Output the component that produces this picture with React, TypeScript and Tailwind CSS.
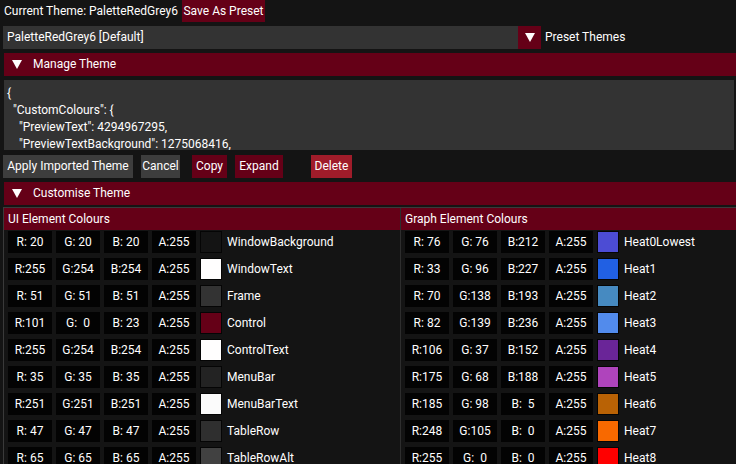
import React from "react";

type Row = { name: string; c: [number, number, number] };

const uiRows: Row[] = [
	{ name: "WindowBackground", c: [20, 20, 20] },
	{ name: "WindowText", c: [255, 254, 254] },
	{ name: "Frame", c: [51, 51, 51] },
	{ name: "Control", c: [101, 0, 23] },
	{ name: "ControlText", c: [255, 254, 254] },
	{ name: "MenuBar", c: [35, 35, 35] },
	{ name: "MenuBarText", c: [251, 251, 251] },
	{ name: "TableRow", c: [47, 47, 47] },
	{ name: "TableRowAlt", c: [65, 65, 65] },
];

const graphRows: Row[] = [
	{ name: "Heat0Lowest", c: [76, 76, 212] },
	{ name: "Heat1", c: [33, 96, 227] },
	{ name: "Heat2", c: [70, 138, 193] },
	{ name: "Heat3", c: [82, 139, 236] },
	{ name: "Heat4", c: [106, 37, 152] },
	{ name: "Heat5", c: [175, 68, 188] },
	{ name: "Heat6", c: [185, 98, 5] },
	{ name: "Heat7", c: [248, 105, 0] },
	{ name: "Heat8", c: [255, 0, 0] },
];

const pad = (n: number) => String(n).padStart(3, " ");

const Triangle = ({ size = 10 }: { size?: number }) => (
	<svg width={size} height={size - 1} viewBox="0 0 10 9">
		<path d="M0 0 L10 0 L5 9 Z" fill="#fffefe" />
	</svg>
);

const Header = ({ title }: { title: string }) => (
	<div className="flex h-[23px] items-center bg-[#650017] ml-[4px]">
		<span className="ml-[8px] mr-[11px] flex">
			<Triangle />
		</span>
		<span>{title}</span>
	</div>
);

const ColourRow = ({ row }: { row: Row }) => {
	const [r, g, b] = row.c;
	const cells = [`R:${pad(r)}`, `G:${pad(g)}`, `B:${pad(b)}`, "A:255"];
	return (
		<div className="flex h-[22px] items-center">
			{cells.map((t, i) => (
				<div
					key={i}
					className="w-[44px] h-[22px] mr-[4px] bg-[#030303] flex items-center justify-center whitespace-pre">
					{t}
				</div>
			))}
			<div
				className="w-[22px] h-[22px] border border-[#050505]"
				style={{ backgroundColor: `rgb(${r},${g},${b})` }}
			/>
			<span className="ml-[5px]">{row.name}</span>
		</div>
	);
};

export default function App() {
	const json = `{
  "CustomColours": {
    "PreviewText": 4294967295,
    "PreviewTextBackground": 1275068416,`;

	return (
		<div
			className="w-[736px] h-[464px] overflow-hidden bg-[#141414] text-[#fffefe] text-[12px] leading-[17px] whitespace-nowrap"
			style={{ fontFamily: "Roboto, sans-serif" }}>
			{/* top line */}
			<div className="flex h-[22px] items-center">
				<span className="ml-[4px] w-[178px]">Current Theme: PaletteRedGrey6</span>
				<div className="h-[22px] w-[83px] bg-[#650017] flex items-center justify-center">
					Save As Preset
				</div>
			</div>

			{/* preset combo */}
			<div className="flex h-[23px] items-center mt-[4px]">
				<div className="ml-[3px] w-[515px] h-full bg-[#333333] flex items-center pl-[4px]">
					PaletteRedGrey6 [Default]
				</div>
				<div className="w-[23px] h-full bg-[#650017] flex items-center justify-center">
					<Triangle />
				</div>
				<span className="ml-[4px]">Preset Themes</span>
			</div>

			<div className="mt-[4px]">
				<Header title="Manage Theme" />
			</div>

			{/* import text */}
			<div className="mt-[4px] ml-[4px] w-[730px] h-[70px] bg-[#333333] overflow-hidden pl-[3px] pt-[5px] whitespace-pre">
				{json}
			</div>

			{/* buttons */}
			<div className="flex h-[23px] mt-[5px]">
				<div className="ml-[3px] w-[130px] bg-[#3d3d3d] flex items-center justify-center">
					Apply Imported Theme
				</div>
				<div className="ml-[8px] w-[39px] bg-[#3d3d3d] flex items-center justify-center">
					Cancel
				</div>
				<div className="ml-[12px] w-[35px] bg-[#650017] flex items-center justify-center">
					Copy
				</div>
				<div className="ml-[8px] w-[48px] bg-[#650017] flex items-center justify-center">
					Expand
				</div>
				<div className="ml-[28px] w-[41px] bg-[#a01c2a] flex items-center justify-center">
					Delete
				</div>
			</div>

			<div className="mt-[4px]">
				<Header title="Customise Theme" />
			</div>

			{/* colour table */}
			<div className="mt-[2px] ml-[3px] border-t border-l border-[#3a3a3a] flex">
				<div className="w-[397px] border-r border-[#2e2e2e]">
					<div className="h-[22px] bg-[#650017] flex items-center pl-[4px]">
						UI Element Colours
					</div>
					<div className="flex flex-col gap-[5px] pt-[1px] pl-[4px]">
						{uiRows.map((r) => (
							<ColourRow key={r.name} row={r} />
						))}
					</div>
				</div>
				<div className="flex-1">
					<div className="h-[22px] bg-[#650017] flex items-center pl-[4px]">
						Graph Element Colours
					</div>
					<div className="flex flex-col gap-[5px] pt-[1px] pl-[4px]">
						{graphRows.map((r) => (
							<ColourRow key={r.name} row={r} />
						))}
					</div>
				</div>
			</div>
		</div>
	);
}
